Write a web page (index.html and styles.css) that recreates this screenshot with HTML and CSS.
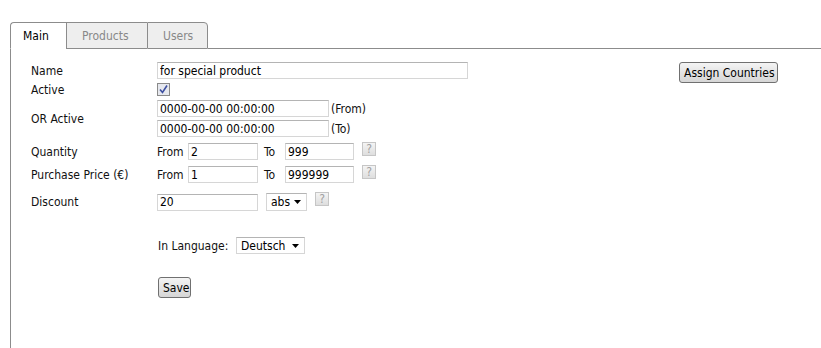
FILE: index.html
```html
<!DOCTYPE html>
<html lang="en">
  <head>
    <title>Edit Discount</title>
    <meta charset="UTF-8" />
    <link rel="stylesheet" href="styles.css">
  </head>
  <body>
    <div class="tabs">
      <div class="tab active">Main</div>
      <div class="tab">Products</div>
      <div class="tab">Users</div>
      <div class="tab-rest"></div>
    </div>
    <div class="panel">
      <div class="form">
        <div class="row r-name">
          <span class="label">Name</span>
          <input class="field w-name" type="text" value="for special product" />
        </div>
        <div class="row r-active">
          <span class="label">Active</span>
          <span class="check">
            <svg width="9" height="9" viewBox="0 0 9 9"><path d="M1 4.5 L3.5 7.5 L8 0.5" fill="none" stroke="#3d4fa0" stroke-width="1.6"/></svg>
          </span>
        </div>
        <div class="row r-or">
          <span class="label">OR Active</span>
          <div class="stack">
            <div><input class="field w-date" type="text" value="0000-00-00 00:00:00" /> <span class="hint">(From)</span></div>
            <div><input class="field w-date" type="text" value="0000-00-00 00:00:00" /> <span class="hint">(To)</span></div>
          </div>
        </div>
        <div class="row r-qty">
          <span class="label">Quantity</span>
          <span class="word">From</span>
          <input class="field w-from" type="text" value="2" />
          <span class="word to">To</span>
          <input class="field w-to" type="text" value="999" />
          <span class="help">?</span>
        </div>
        <div class="row r-price">
          <span class="label">Purchase Price (€)</span>
          <span class="word">From</span>
          <input class="field w-from" type="text" value="1" />
          <span class="word to">To</span>
          <input class="field w-to" type="text" value="999999" />
          <span class="help">?</span>
        </div>
        <div class="row r-discount">
          <span class="label">Discount</span>
          <input class="field w-discount" type="text" value="20" />
          <span class="select s-abs">abs <svg width="7" height="4" viewBox="0 0 7 4"><path d="M0 0 H7 L3.5 4 Z" fill="#000"/></svg></span>
          <span class="help">?</span>
        </div>
        <div class="row r-lang">
          <span class="lang-label">In Language:</span>
          <span class="select s-lang">Deutsch <svg width="7" height="4" viewBox="0 0 7 4"><path d="M0 0 H7 L3.5 4 Z" fill="#000"/></svg></span>
        </div>
        <div class="row r-save">
          <button class="btn">Save</button>
        </div>
      </div>
      <div class="side">
        <button class="btn">Assign Countries</button>
      </div>
    </div>
  </body>
</html>
```

FILE: styles.css
```css
* {
  box-sizing: border-box;
  margin: 0;
  padding: 0;
}
body {
  font-family: "DejaVu Sans Condensed", "DejaVu Sans", sans-serif;
  font-stretch: condensed;
  font-size: 12px;
  color: #111;
  background: #fff;
  padding: 22px 0 0 10px;
  height: 348px;
  overflow: hidden;
}
.tabs {
  display: flex;
  height: 27px;
}
.tab {
  border: 1px solid #8c8c8c;
  border-right: none;
  border-bottom: 1px solid #8c8c8c;
  background: #eeeeee;
  color: #888;
  padding: 6px 15px 0 15px;
}
.tab:first-child {
  border-top-left-radius: 4px;
}
.tab:nth-child(3) {
  border-right: 1px solid #8c8c8c;
  border-top-right-radius: 4px;
  width: 61px;
}
.tab.active {
  background: #fff;
  color: #000;
  border-bottom-color: #fff;
  width: 56px;
  padding-left: 12px;
}
.tab:nth-child(2) {
  width: 81px;
}
.tab-rest {
  flex: 1;
  border-bottom: 1px solid #8c8c8c;
}
.panel {
  display: flex;
  border-left: 1px solid #8c8c8c;
  height: 300px;
  padding: 13px 0 0 20px;
}
.form {
  width: 520px;
}
.side {
  padding-left: 128px;
}
.row {
  display: flex;
  align-items: center;
  min-height: 17px;
}
.label {
  width: 126px;
  flex: none;
}
.field {
  font-family: inherit;
  font-stretch: inherit;
  font-size: 12px;
  color: #000;
  height: 17px;
  border: 1px solid #d6d6d6;
  border-top-color: #b4b4b4;
  padding: 0 2px;
  outline: none;
}
.w-name { width: 311px; }
.w-date { width: 172px; }
.w-from { width: 70px; }
.w-to { width: 69px; }
.w-discount { width: 101px; }
.check {
  display: inline-flex;
  align-items: center;
  justify-content: center;
  width: 13px;
  height: 13px;
  border: 1px solid #8a8a8a;
  background: #e6e8ee;
}
.r-active { margin-top: 2px; }
.r-or { margin-top: 2px; }
.stack div {
  display: flex;
  align-items: center;
}
.stack div + div {
  margin-top: 3px;
}
.hint {
  margin-left: 2px;
}
.r-qty { margin-top: 6px; }
.r-price { margin-top: 6px; }
.word {
  width: 31px;
}
.word.to {
  width: 21px;
  margin-left: 6px;
}
.help {
  display: inline-flex;
  align-items: center;
  justify-content: center;
  width: 14px;
  height: 14px;
  margin-left: 8px;
  align-self: flex-start;
  margin-top: -1px;
  border: 1px solid #c6c6c6;
  background: linear-gradient(#f4f4f4, #dedede);
  color: #a0a0a0;
  font-size: 12px;
}
.r-discount { margin-top: 10px; }
.select {
  display: inline-flex;
  align-items: center;
  justify-content: space-between;
  height: 18px;
  border: 1px solid #d6d6d6;
  border-top-color: #b4b4b4;
  padding: 0 5px 0 4px;
  color: #000;
}
.s-abs {
  width: 41px;
  margin-left: 8px;
}
.r-lang {
  margin-top: 26px;
  padding-left: 127px;
}
.lang-label {
  width: 78px;
}
.s-lang {
  width: 69px;
  height: 17px;
}
.r-save {
  margin-top: 23px;
  padding-left: 127px;
}
.btn {
  font-family: inherit;
  font-stretch: inherit;
  font-size: 12px;
  color: #000;
  height: 21px;
  padding: 0 4px;
  white-space: nowrap;
  border: 1px solid #707070;
  border-radius: 3px;
  background: linear-gradient(#f4f4f4, #e4e4e4 50%, #d6d6d6);
}
.r-save .btn {
  width: 33px;
}
.side .btn {
  width: 99px;
}
```
